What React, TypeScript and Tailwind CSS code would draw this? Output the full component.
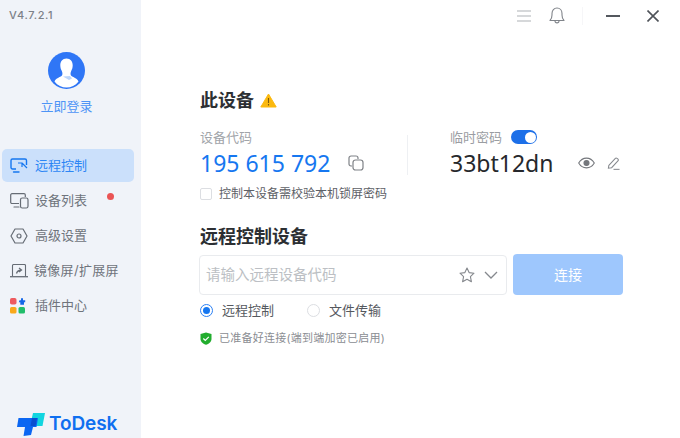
import React from "react";

const CJK = "font-['Inter','Noto_Sans_CJK_SC',sans-serif]";

function Monitor() {
  return (
    <svg width="18" height="15" viewBox="0 0 18 15" fill="none" stroke="#1677f0" strokeWidth="1.400">
      <path d="M6 11H2.500A1.500 1.500 0 0 1 1 9.500V2.500A1.500 1.500 0 0 1 2.500 1H15A1.500 1.500 0 0 1 16.500 2.500V7" />
      <path d="M3.500 14H9" strokeLinecap="round" />
      <path d="M8 5h4v4M12 5l5 5" strokeWidth="1.200" />
    </svg>
  );
}
function Devices() {
  return (
    <svg width="19" height="16" viewBox="0 0 19 16" fill="none" stroke="#666c75" strokeWidth="1.200">
      <path d="M9 10.500H2A1.300 1.300 0 0 1 0.700 9.200V2A1.300 1.300 0 0 1 2 0.700H14A1.300 1.300 0 0 1 15.300 2V4" />
      <path d="M4 14H9" strokeLinecap="round" />
      <rect x="10.500" y="5" width="7.500" height="10" rx="1.800" />
    </svg>
  );
}
function Hex() {
  return (
    <svg width="18" height="16" viewBox="0 0 18 16" fill="none" stroke="#666c75" strokeWidth="1.200">
      <path d="M5 1H13L17 8L13 15H5L1 8Z" strokeLinejoin="round" />
      <circle cx="9" cy="8" r="2" />
    </svg>
  );
}
function Mirror() {
  return (
    <svg width="18" height="14" viewBox="0 0 18 14" fill="none" stroke="#666c75" strokeWidth="1.100">
      <path d="M2.500 12V1.500A1 1 0 0 1 3.500 0.500H14.500A1 1 0 0 1 15.500 1.500V12" />
      <path d="M0 12.700H18" strokeWidth="1.300" />
      <path d="M6.500 9.500C7 7.500 8.300 6.300 11 6M9 4L11.500 6L9 8" strokeWidth="1.300" />
    </svg>
  );
}
function Plugins() {
  return (
    <svg width="16" height="16" viewBox="0 0 16 16">
      <rect x="0" y="0" width="6.500" height="6.500" rx="1.800" fill="#ee5a5f" />
      <rect x="0" y="9" width="6.500" height="6.500" rx="1.600" fill="#f9a81b" />
      <rect x="8.500" y="9" width="6.500" height="6.500" rx="1.600" fill="#21bd6b" />
      <path d="M9.500 2.200H11V0.300H13V2.200H15.200V4.300H14V6.800H10.300V4.300H8.800Z" fill="#1467e8" />
    </svg>
  );
}

function NavItem({ icon, label, active, dot, tight }: { icon: React.ReactNode; label: string; active?: boolean; dot?: boolean; tight?: boolean }) {
  return (
    <div className={`relative flex h-[33px] w-[132px] items-center rounded-[5px] pl-[8px] ${active ? "bg-[#cbe0fb] text-[#2b86f5]" : "text-[#6f747c]"}`}>
      <span className="flex w-[25px] shrink-0 items-center justify-start">{icon}</span>
      <span className={`text-[13px] leading-none whitespace-nowrap ${tight ? "-ml-[1px] tracking-[0.3px]" : ""}`}>{label}</span>
      {dot && <span className="absolute top-[9px] left-[105px] h-[7px] w-[7px] rounded-full bg-[#ea5455]" />}
    </div>
  );
}

export default function App() {
  return (
    <div className={`flex h-[438px] w-[680px] overflow-hidden bg-white ${CJK}`}>
      <aside className="flex h-full w-[141px] shrink-0 flex-col bg-[#f0f3f9]">
        <div className="pt-[9px] pl-[9px] text-[11px] leading-[12px] font-medium tracking-[0.6px] text-[#7c8188]">V4.7.2.1</div>
        <div className="mt-[31px] flex flex-col items-center pr-[8px]">
          <div className="h-[37px] w-[37px]">
            <svg width="37" height="37" viewBox="0 0 37 37">
              <circle cx="18.500" cy="18.500" r="18.500" fill="#2f76f6" />
              <path d="M18.500 6.500C14.500 6.500 12.200 9.500 12.300 13.500C12.400 16 13 17.500 13.800 19C14.500 20.500 14.700 22 14 23.500C12 25.500 8 26 6.500 29.500C9.500 33.500 14 35.500 18.500 35.500C23 35.500 27.500 33.500 30.500 29.500C29 26 25 25.500 23 23.500C22.300 22 22.500 20.500 23.200 19C24 17.500 24.600 16 24.700 13.500C24.800 9.500 22.500 6.500 18.500 6.500Z" fill="#fff" />
              <path d="M15 24.500L21 28L24 26.500L22 24Z" fill="#bcd6fb" />
            </svg>
          </div>
          <div className="mt-[8px] text-[13px] leading-[18px] text-[#4d94f6]">立即登录</div>
        </div>
        <nav className="mt-[34px] flex flex-col gap-[2px] pl-[2px]">
          <NavItem active icon={<Monitor />} label="远程控制" />
          <NavItem icon={<Devices />} label="设备列表" dot />
          <NavItem icon={<Hex />} label="高级设置" />
          <NavItem icon={<Mirror />} label="镜像屏/扩展屏" tight />
          <NavItem icon={<Plugins />} label="插件中心" />
        </nav>
        <div className="mt-auto mb-[2px] flex items-center pl-[17px]">
          <svg width="28" height="24" viewBox="0 0 28 24">
            <path d="M16 1H28L25.500 14H13Z" fill="#12d5e0" />
            <path d="M1.500 6H21L19.500 15H16L14 23L6.500 24L8 15H0Z" fill="#0b66f2" />
            <path d="M15 6H20L18.500 14H13.500Z" fill="#0a4fd0" />
          </svg>
          <span className="ml-[4px] font-['Inter',sans-serif] text-[19px] leading-[24px] font-semibold tracking-[-0.1px] text-[#0f6ff0]">ToDesk</span>
        </div>
      </aside>

      <main className="flex min-w-0 flex-1 flex-col">
        <header className="flex h-[31px] items-center justify-end">
          <svg width="14" height="12" viewBox="0 0 14 12" stroke="#aeb1b6" strokeWidth="1.200" className="mr-[18px]">
            <path d="M0 1H14M0 6H14M0 11H14" />
          </svg>
          <svg width="16" height="17" viewBox="0 0 16 17" fill="none" stroke="#80848a" strokeWidth="1.100" className="mr-[17px]">
            <path d="M1 13.500H15C13.500 12 13 11 13 8V6.500C13 3.500 11 1 8 1S3 3.500 3 6.500V8C3 11 2.500 12 1 13.500Z" strokeLinejoin="round" />
            <path d="M6 14C6 16.500 10 16.500 10 14" />
          </svg>
          <div className="mr-[23px] h-[18px] w-px bg-[#f6f6f8]" />
          <div className="mr-[27px] h-[2px] w-[14px] bg-[#54585e]" />
          <svg width="12" height="12" viewBox="0 0 12 12" stroke="#4f5359" strokeWidth="1.600" className="mr-[21px]">
            <path d="M0.500 0.500L11.500 11.500M11.500 0.500L0.500 11.500" />
          </svg>
        </header>

        <div className="flex flex-col pt-[58px] pl-[59px]">
          <div className="flex h-[24px] items-center">
            <h2 className="text-[18px] leading-[24px] font-bold text-[#2c2f33]">此设备</h2>
            <svg width="17" height="15" viewBox="0 0 17 15" className="ml-[6px] -translate-y-[1px]">
              <path d="M8.500 1L16.200 14H0.800Z" fill="#fbb90f" stroke="#fbb90f" strokeLinejoin="round" />
              <path d="M8.500 5V10M8.500 11V12.500" stroke="#7c5a0a" strokeWidth="1.100" />
            </svg>
          </div>

          <div className="mt-[15px] flex h-[47px] items-start">
            <div className="w-[207px]">
              <div className="text-[13px] leading-[18px] text-[#a1a4a9]">设备代码</div>
              <div className="mt-[5px] flex h-[24px] items-center">
                <span className="font-['Noto_Sans',sans-serif] text-[23px] leading-[24px] text-[#1677f0]">195 615 792</span>
                <svg width="16" height="16" viewBox="0 0 16 16" fill="none" stroke="#7f8287" strokeWidth="1.200" className="ml-[18px]">
                  <path d="M4 11H3A2 2 0 0 1 1 9V3A2 2 0 0 1 3 1H8A2 2 0 0 1 10 3V4" />
                  <rect x="5" y="5" width="10" height="10" rx="2.500" />
                </svg>
              </div>
            </div>
            <div className="mt-[7px] h-[40px] w-px bg-[#eef0f3]" />
            <div className="ml-[42px]">
              <div className="flex h-[18px] items-center">
                <span className="text-[13px] leading-[18px] text-[#9a9da2]">临时密码</span>
                <span className="ml-[9px] flex h-[14px] w-[26px] items-center justify-end rounded-full bg-[#1c6fe8] pr-[1px]">
                  <span className="h-[11px] w-[11px] rounded-full bg-white" />
                </span>
              </div>
              <div className="mt-[5px] flex h-[24px] items-center">
                <span className="font-['Noto_Sans',sans-serif] text-[23px] leading-[24px] text-[#26282c]">33bt12dn</span>
                <svg width="17" height="12" viewBox="0 0 17 12" fill="none" stroke="#74777c" strokeWidth="1.100" className="ml-[25px]">
                  <path d="M0.700 6C4.500 -0.500 12.500 -0.500 16.300 6C12.500 12.500 4.500 12.500 0.700 6Z" />
                  <circle cx="8.500" cy="6" r="2.500" fill="#74777c" />
                </svg>
                <svg width="13" height="13" viewBox="0 0 14 14" fill="none" stroke="#85888d" strokeWidth="1.100" className="ml-[12px]">
                  <path d="M2 9L9 1.500C10 0.500 13 2.500 12 4L5 11.500L1.500 12Z" />
                  <path d="M7 13.300H13.500" />
                </svg>
              </div>
            </div>
          </div>

          <label className="mt-[11px] flex h-[16px] items-center">
            <span className="h-[12px] w-[12px] rounded-[2px] border border-[#dcdee2] bg-white" />
            <span className="ml-[7px] text-[12px] leading-[16px] text-[#5d6066]">控制本设备需校验本机锁屏密码</span>
          </label>

          <h2 className="mt-[23px] text-[18px] leading-[24px] font-bold text-[#2c2f33]">远程控制设备</h2>

          <div className="mt-[5px] -ml-[1px] flex h-[41px] items-center">
            <div className="flex h-[40px] w-[308px] items-center rounded-[4px] border border-[#e9ebee] pr-[8px] pl-[6px]">
              <span className="flex-1 text-[14.500px] text-[#bcbfc4]">请输入远程设备代码</span>
              <svg width="16" height="16" viewBox="0 0 16 16" fill="none" stroke="#85888d" strokeWidth="1.100" className="mr-[9px]">
                <path d="M8 1L10.100 5.600L15 6.200L11.400 9.600L12.400 14.700L8 12.200L3.600 14.700L4.600 9.600L1 6.200L5.900 5.600Z" strokeLinejoin="round" />
              </svg>
              <svg width="14" height="8" viewBox="0 0 14 8" fill="none" stroke="#85888d" strokeWidth="1.300">
                <path d="M1 1L7 7L13 1" />
              </svg>
            </div>
            <button className="ml-[6px] h-[41px] w-[110px] rounded-[4px] bg-[#9ec7fd] text-[14px] text-white">连接</button>
          </div>

          <div className="mt-[7px] flex h-[16px] items-center">
            <span className="flex h-[13px] w-[13px] items-center justify-center rounded-full border border-[#2a80f4] bg-white">
              <span className="h-[7px] w-[7px] rounded-full bg-[#1677f0]" />
            </span>
            <span className="ml-[9px] text-[13px] leading-[16px] text-[#55585e]">远程控制</span>
            <span className="ml-[33px] h-[13px] w-[13px] rounded-full border border-[#dcdee2] bg-white" />
            <span className="ml-[9px] text-[13px] leading-[16px] text-[#55585e]">文件传输</span>
          </div>

          <div className="mt-[12px] flex h-[16px] items-center">
            <svg width="12" height="13" viewBox="0 0 12 13">
              <path d="M6 0.500L11.500 2V7C11.500 10 8.500 12 6 12.800C3.500 12 0.500 10 0.500 7V2Z" fill="#22ad2e" />
              <path d="M3.300 6.500L5.300 8.500L8.800 4.800" fill="none" stroke="#fff" strokeWidth="1.200" />
            </svg>
            <span className="ml-[7px] text-[11px] leading-[16px] tracking-[0.25px] text-[#8a8d92]">已准备好连接(端到端加密已启用)</span>
          </div>
        </div>
      </main>
    </div>
  );
}
